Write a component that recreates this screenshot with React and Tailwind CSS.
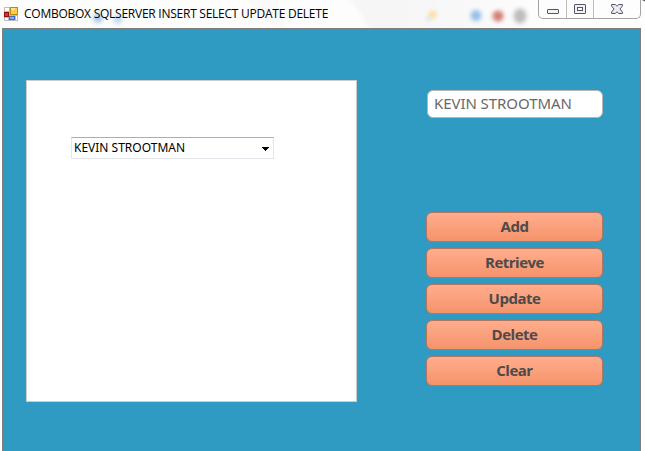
import React from "react";

const actions = ["Add", "Retrieve", "Update", "Delete", "Clear"];

function AppIcon() {
  return (
    <svg className="block h-[14px] w-[14px] shrink-0" viewBox="0 0 14 14" shapeRendering="crispEdges">
      <rect width="14" height="14" fill="#bdbdbd" />
      <rect x="1" y="1" width="4" height="3" fill="#fff" />
      <rect x="1" y="11" width="3" height="2" fill="#fff" />
      <rect x="0" y="5" width="5" height="5" fill="#8e1010" />
      <rect x="1" y="6" width="3" height="3" fill="#cf3a2c" />
      <rect x="6" y="0" width="8" height="8" fill="#b98a13" />
      <rect x="7" y="1" width="6" height="6" fill="#fbcf45" />
      <rect x="7" y="1" width="4" height="2" fill="#fee68d" />
      <rect x="5" y="9" width="6" height="4" fill="#3d6cc9" />
      <rect x="6" y="10" width="4" height="2" fill="#82adf0" />
      <rect x="12" y="9" width="1" height="4" fill="#fff" />
    </svg>
  );
}

function WindowControls() {
  return (
    <div className="flex h-[19px] w-[103px] overflow-hidden rounded-b-[5px] border border-t-0 border-[#a3a3a3] bg-[#fdfdfd]">
      <div className="flex w-[28px] justify-center border-r border-[#bcbcbc]">
        <svg className="mt-[9px] block h-[5px] w-[12px]" viewBox="0 0 12 5">
          <rect x="0.5" y="0.5" width="11" height="4" rx="0.5" fill="#f3f3f3" stroke="#535666" />
        </svg>
      </div>
      <div className="flex w-[27px] justify-center border-r border-[#bcbcbc]">
        <svg className="mt-[4px] block h-[10px] w-[12px]" viewBox="0 0 12 10">
          <rect x="0.5" y="0.5" width="11" height="9" rx="0.5" fill="#f1f1f1" stroke="#535666" />
          <rect x="3.5" y="3.5" width="5" height="3" fill="#fff" stroke="#535666" />
        </svg>
      </div>
      <div className="flex flex-1 justify-center">
        <svg className="mt-[4px] block h-[10px] w-[12px]" viewBox="0 0 12 10">
          <path
            d="M.6.5h3.6L6 2.2 7.800.5h3.600v1.500L9 5l2.400 3v1.500H7.800L6 7.800 4.200 9.500H.6V8L3 5 .6 2z"
            fill="#ececf0"
            stroke="#535666"
            strokeLinejoin="round"
          />
        </svg>
      </div>
    </div>
  );
}

function GlassGlow() {
  return (
    <svg className="absolute left-0 top-0 h-[28px] w-[645px]" viewBox="0 0 645 28">
      <defs>
        <filter id="soft" x="-60%" y="-60%" width="220%" height="220%">
          <feGaussianBlur stdDeviation="2" />
        </filter>
        <linearGradient id="haze" x1="0" x2="1">
          <stop offset="0" stopColor="#f5f5f5" />
          <stop offset="0.6" stopColor="#f9f9f9" />
          <stop offset="1" stopColor="#fff" />
        </linearGradient>
      </defs>
      <g filter="url(#soft)">
        <path d="M345 -8H560V36H373Q362 14 345 -8z" fill="url(#haze)" />
      </g>
      <path d="M245 0H277L285 28H275z" fill="#fafafa" />
      <g filter="url(#soft)">
        <circle cx="98" cy="18" r="5" fill="#a9c8ea" />
        <circle cx="118" cy="19" r="4.500" fill="#bcd7f1" />
        <circle cx="76" cy="19" r="3" fill="#fff5df" />
        <circle cx="432.500" cy="14.500" r="4" fill="#fbdca6" />
        <circle cx="428" cy="19" r="2" fill="#bedcf0" />
        <circle cx="476" cy="15.500" r="5.500" fill="#94c0e9" />
        <circle cx="498" cy="16" r="5.500" fill="#d27d73" />
        <ellipse cx="520" cy="16" rx="6.500" ry="7.500" fill="#bdbdbf" />
      </g>
      <path d="M642 0h3v1.500z" fill="#555" />
    </svg>
  );
}

export default function App() {
  return (
    <div className="flex h-[451px] w-[645px] flex-col overflow-hidden bg-[#fdfdfd] font-['Noto_Sans',sans-serif]">
      <header className="relative flex h-[28px] shrink-0 justify-between pl-[4px] pr-[4px]">
        <GlassGlow />
        <div className="relative flex pt-[7px]">
          <AppIcon />
          <h1 className="ml-[6px] mt-[-1px] h-4 whitespace-nowrap font-['Open_Sans',sans-serif] text-[12px] leading-4 tracking-[-0.25px] text-black">
            COMBOBOX SQLSERVER INSERT SELECT UPDATE DELETE
          </h1>
        </div>
        <div className="relative">
          <WindowControls />
        </div>
      </header>
      <main className="ml-[2px] flex w-[639px] flex-1 items-start border-x border-t border-[#7e7e7e] bg-[#2f9bc2]">
        <section className="ml-[23px] mt-[51px] h-[322px] w-[331px] border border-[#c9cdce] bg-white pl-[44px] pt-[56px]">
          <div className="flex h-[22px] w-[203px] items-center justify-between rounded-[1px] border border-[#e3e3eb] border-t-[#abadb3] pl-[2px] pr-[4px]">
            <span className="whitespace-nowrap text-[12px] leading-5 tracking-[0px] text-black">KEVIN STROOTMAN</span>
            <svg className="mt-[2px] block h-[4px] w-[7px]" viewBox="0 0 7 4" shapeRendering="crispEdges">
              <path d="M0 0h7v1H6v1H5v1H4v1H3V3H2V2H1V1H0z" fill="#000" />
            </svg>
          </div>
        </section>
        <aside className="ml-[69px] mt-[61px] w-[177px]">
          <div className="ml-px flex h-[28px] items-center rounded-[6px] border border-[#b5b5b5] bg-white pl-[6px]">
            <span className="mb-[2px] whitespace-nowrap text-[15px] leading-5 tracking-[-0.07px] text-[#696969]">KEVIN STROOTMAN</span>
          </div>
          <div className="mt-[94px] flex flex-col gap-[6px]">
            {actions.map((label) => (
              <button
                key={label}
                className="flex h-[30px] items-center justify-center rounded-[6px] border border-[#b27660] bg-gradient-to-b from-[#ffad8d] to-[#f5936b] pb-[2px] font-['Open_Sans',sans-serif] text-[15px] font-bold leading-5 tracking-[-0.5px] text-[#4b4b4b]"
              >
                {label}
              </button>
            ))}
          </div>
        </aside>
      </main>
    </div>
  );
}
